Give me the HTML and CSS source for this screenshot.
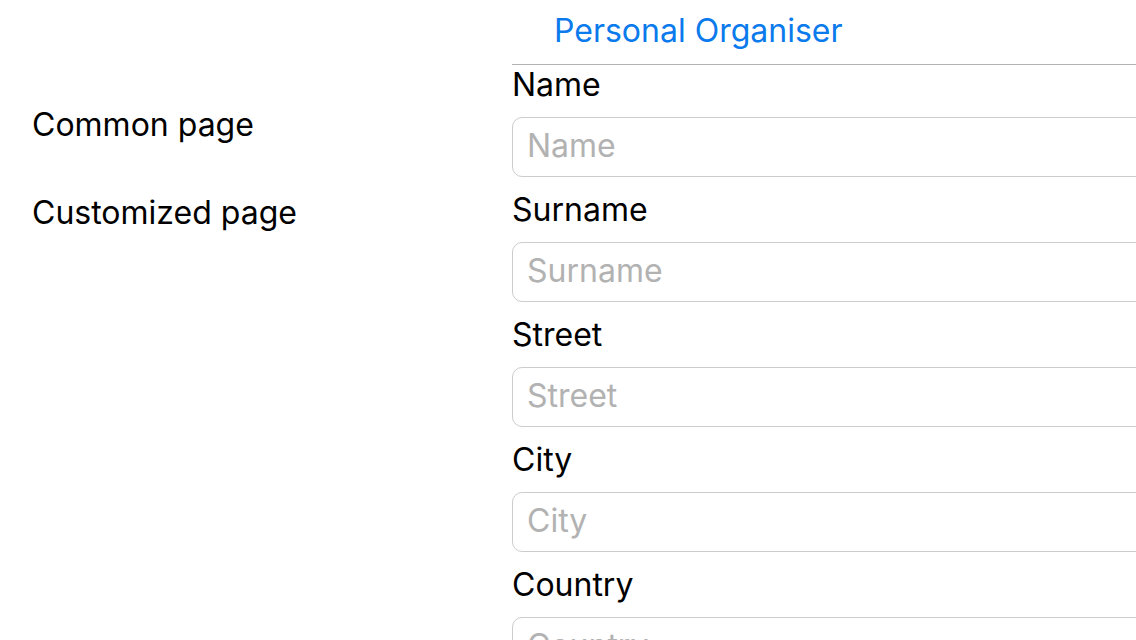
FILE: index.html
```html
<!DOCTYPE html>
<html lang="en">
<head>
<meta charset="utf-8">
<title>Personal Organiser</title>
<link rel="stylesheet" href="styles.css">
</head>
<body>
<div class="shell">
  <nav class="menu">
    <a class="menu-item" href="#common">Common page</a>
    <a class="menu-item" href="#customized">Customized page</a>
  </nav>
  <main class="page">
    <header class="bar"><button class="title" type="button">Personal Organiser</button></header>
    <form class="form">
      <label class="label" for="name">Name</label>
      <input class="field" id="name" type="text" placeholder="Name">
      <label class="label" for="surname">Surname</label>
      <input class="field" id="surname" type="text" placeholder="Surname">
      <label class="label" for="street">Street</label>
      <input class="field" id="street" type="text" placeholder="Street">
      <label class="label" for="city">City</label>
      <input class="field" id="city" type="text" placeholder="City">
      <label class="label" for="country">Country</label>
      <input class="field" id="country" type="text" placeholder="Country">
    </form>
  </main>
</div>
</body>
</html>
```
FILE: styles.css
```css
* {
  box-sizing: border-box;
}

body {
  margin: 0;
  background: #fff;
  color: #000;
  font-family: Inter, "Liberation Sans", sans-serif;
  font-size: 32px;
}

.shell {
  display: flex;
  height: 100vh;
  overflow: hidden;
}

.menu {
  flex: 0 0 512px;
  display: flex;
  flex-direction: column;
  padding: 81px 32px 0;
}

.menu-item {
  color: inherit;
  text-decoration: none;
  line-height: 88px;
}

.page {
  flex: 1;
  overflow: hidden;
}

.bar {
  height: 65px;
  padding: 0 42px;
  border-bottom: 1px solid #b2b2b2;
}

.title {
  padding: 0;
  border: 0;
  background: none;
  color: #0a7aec;
  font: inherit;
  line-height: 62px;
}

.form {
  display: flex;
  flex-direction: column;
  margin-right: -24px;
}

.label {
  height: 52px;
  line-height: 40px;
}

.field {
  height: 60px;
  margin-bottom: 13px;
  padding: 0 14px 4px;
  border: 1px solid #cccccc;
  border-radius: 10px;
  background: #fff;
  color: #000;
  font: inherit;
}

.field::placeholder {
  color: #b2b2b2;
  opacity: 1;
}
```
